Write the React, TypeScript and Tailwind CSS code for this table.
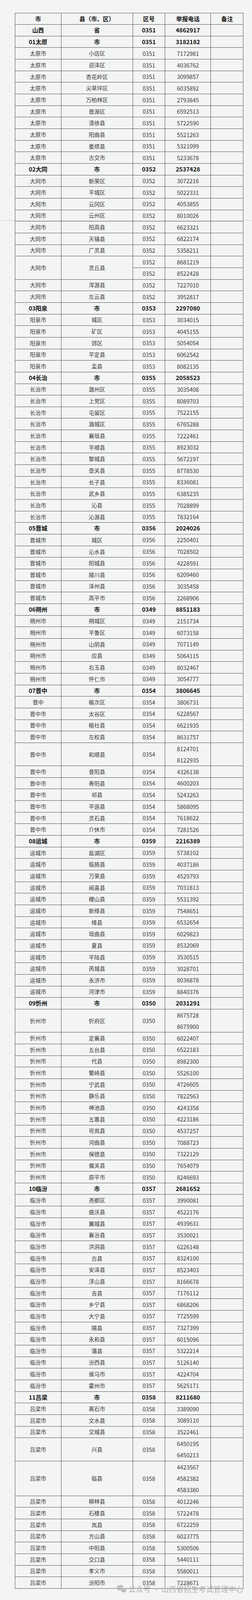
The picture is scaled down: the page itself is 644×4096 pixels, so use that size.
import React from 'react';

type Item = [string, string, string?];
type City = { head: string; code: string; phone: string; name: string; items: Item[] };

const CITIES: City[] = [
  { head: '01太原', code: '0351', phone: '3182182', name: '太原市', items: [
    ['小店区', '7172981'], ['迎泽区', '4036762'], ['杏花岭区', '3099857'], ['尖草坪区', '6035892'], ['万柏林区', '2793845'],
    ['晋源区', '6592513'], ['清徐县', '5722590'], ['阳曲县', '5521263'], ['娄烦县', '5321099'], ['古交市', '5233678'],
  ] },
  { head: '02大同', code: '0352', phone: '2537428', name: '大同市', items: [
    ['新荣区', '3072216'], ['平城区', '5022331'], ['云冈区', '4053855'], ['云州区', '8010026'], ['阳高县', '6623321'],
    ['天镇县', '6822174'], ['广灵县', '5358211'], ['灵丘县', '8681219|8522428'], ['浑源县', '7227010'], ['左云县', '3952817'],
  ] },
  { head: '03阳泉', code: '0353', phone: '2297080', name: '阳泉市', items: [
    ['城区', '3034015'], ['矿区', '4045155'], ['郊区', '5054054'], ['平定县', '6062542'], ['盂县', '8082135'],
  ] },
  { head: '04长治', code: '0355', phone: '2058523', name: '长治市', items: [
    ['潞州区', '3035408'], ['上党区', '8089703'], ['屯留区', '7522155'], ['潞城区', '6765288'], ['襄垣县', '7222461'],
    ['平顺县', '8923032'], ['黎城县', '5672197'], ['壶关县', '8778530'], ['长子县', '8336081'], ['武乡县', '6385235'],
    ['沁县', '7028899'], ['沁源县', '7832164'],
  ] },
  { head: '05晋城', code: '0356', phone: '2024026', name: '晋城市', items: [
    ['城区', '2250401'], ['沁水县', '7028502'], ['阳城县', '4228591'], ['陵川县', '6209460'], ['泽州县', '3035458'], ['高平市', '2268906'],
  ] },
  { head: '06朔州', code: '0349', phone: '8851183', name: '朔州市', items: [
    ['朔城区', '2151734'], ['平鲁区', '6073158'], ['山阴县', '7071149'], ['应县', '5064115'], ['右玉县', '8032467'], ['怀仁市', '3054777'],
  ] },
  { head: '07晋中', code: '0354', phone: '3806645', name: '晋中市', items: [
    ['榆次区', '3806731', '晋中'], ['太谷区', '6228567'], ['榆社县', '6621935'], ['左权县', '8631757'], ['和顺县', '8124701/8122935'],
    ['昔阳县', '4326138'], ['寿阳县', '4600203'], ['祁县', '5243263'], ['平遥县', '5868095'], ['灵石县', '7618622'], ['介休市', '7281526'],
  ] },
  { head: '08运城', code: '0359', phone: '2216389', name: '运城市', items: [
    ['盐湖区', '5738102'], ['临猗县', '4037186'], ['万荣县', '4529793'], ['闻喜县', '7031813'], ['稷山县', '5531392'],
    ['新绛县', '7548651'], ['绛县', '6532654'], ['垣曲县', '6029823'], ['夏县', '8532069'], ['平陆县', '3530515'],
    ['芮城县', '3028701'], ['永济市', '8036878'], ['河津市', '8840376'],
  ] },
  { head: '09忻州', code: '0350', phone: '2031291', name: '忻州市', items: [
    ['忻府区', '8675728/8675900'], ['定襄县', '6022407'], ['五台县', '6522183'], ['代县', '8982300'], ['繁峙县', '5526100'],
    ['宁武县', '4726605'], ['静乐县', '7822563'], ['神池县', '4243358'], ['五寨县', '4223186'], ['岢岚县', '4537257'],
    ['河曲县', '7088723'], ['保德县', '7322129'], ['偏关县', '7654079'], ['原平市', '8246693'],
  ] },
  { head: '10临汾', code: '0357', phone: '2681652', name: '临汾市', items: [
    ['尧都区', '3990081'], ['曲沃县', '4522176'], ['翼城县', '4939631'], ['襄汾县', '3530021'], ['洪洞县', '6226148'],
    ['古县', '8324100'], ['安泽县', '8523403'], ['浮山县', '8166678'], ['吉县', '7176112'], ['乡宁县', '6868206'],
    ['大宁县', '7725599'], ['隰县', '7327399'], ['永和县', '6015096'], ['蒲县', '5322214'], ['汾西县', '5126140'],
    ['侯马市', '4224704'], ['霍州市', '5625171'],
  ] },
  { head: '11吕梁', code: '0358', phone: '8211680', name: '吕梁市', items: [
    ['离石市', '3389090'], ['文水县', '3089110'], ['交城县', '3522461'], ['兴县', '6450195/6450213'],
    ['临县', '4423567/4582382/4583380'], ['柳林县', '4012246'], ['石楼县', '5722478'], ['岚县', '6722259'],
    ['方山县', '6023775'], ['中阳县', '5300506'], ['交口县', '5440111'], ['孝义市', '5580011'], ['汾阳市', '7228671'],
  ] },
];

const ROW_H: Record<number, string> = {
  1: 'h-[29.67px]',
  2: 'h-[59.34px]',
  3: 'h-[89px]',
};

const cell = 'border border-[#505050] p-0 text-center align-middle';
const num = 'text-[14.5px]';

function BoldRow({ a, b, c, d }: { a: string; b: string; c: string; d: string }) {
  return (
    <tr className={`${ROW_H[1]} font-bold text-[#151515] text-[15px]`}>
      <td className={cell}>{a}</td>
      <td className={cell}>{b}</td>
      <td className={cell}>{c}</td>
      <td className={`${cell} border-l-[#222]`}>{d}</td>
      <td className={cell}></td>
    </tr>
  );
}

function ItemRows({ city, code, item }: { city: string; code: string; item: Item }) {
  const [county, phone, override] = item;
  const name = override ?? city;

  // 灵丘县: two area-code / phone lines with their own borders
  if (phone.includes('|')) {
    const [p1, p2] = phone.split('|');
    return (
      <>
        <tr className={`${ROW_H[1]} text-[#383838] text-[14px]`}>
          <td rowSpan={2} className={cell}>{name}</td>
          <td rowSpan={2} className={cell}>{county}</td>
          <td className={`${cell} ${num}`}>{code}</td>
          <td className={`${cell} ${num} border-l-[#222]`}>{p1}</td>
          <td className={cell}></td>
        </tr>
        <tr className={`${ROW_H[1]} text-[#383838] text-[14px]`}>
          <td className={`${cell} ${num}`}>{code}</td>
          <td className={`${cell} ${num} border-l-[#222]`}>{p2}</td>
          <td className={cell}></td>
        </tr>
      </>
    );
  }

  const phones = phone.split('/');
  return (
    <tr className={`${ROW_H[phones.length]} text-[#383838] text-[14px]`}>
      <td className={cell}>{name}</td>
      <td className={cell}>{county}</td>
      <td className={`${cell} ${num}`}>{code}</td>
      <td className={`${cell} ${num} border-l-[#222]`}>
        {phones.length > 1
          ? phones.map((p) => (
              <div key={p} className="leading-[29px]">{p}</div>
            ))
          : phone}
      </td>
      <td className={cell}></td>
    </tr>
  );
}

function WeChatIcon() {
  return (
    <svg width="26" height="21" viewBox="0 0 26 21" fill="#b4b4b4">
      <path d="M9.6 1C4.6 1 .8 4.2.8 8.1c0 2.2 1.2 4.1 3.1 5.4l-.8 2.5 2.9-1.5c1 .3 2.2.5 3.4.5h.6c-.2-.6-.3-1.2-.3-1.8 0-3.6 3.4-6.5 7.7-6.5h.5C17.3 3.4 13.8 1 9.6 1z" />
      <circle cx="6.6" cy="6.3" r="1.1" fill="#f3f4f4" />
      <circle cx="12.4" cy="6.3" r="1.1" fill="#f3f4f4" />
      <path d="M17.8 8.2c-3.9 0-7 2.6-7 5.8s3.1 5.8 7 5.8c.8 0 1.6-.1 2.4-.4l2.3 1.2-.6-2c1.7-1.1 2.9-2.8 2.9-4.6 0-3.2-3.1-5.8-7-5.8z" />
      <circle cx="15.5" cy="12.6" r="0.9" fill="#f3f4f4" />
      <circle cx="20.2" cy="12.6" r="0.9" fill="#f3f4f4" />
    </svg>
  );
}

export default function App() {
  return (
    <div className="relative min-h-[4096px] bg-[#f3f4f4] pl-[37.5px] pt-[32.5px] font-['Noto_Sans_CJK_SC','Noto_Sans',sans-serif]">
      {/* faint stitching line from the original screenshot */}
      <div className="absolute left-0 right-0 top-[564px] h-px bg-[#cfcfcf]" />

      <div className="relative w-[584px]">
        <table className="w-[584px] table-fixed border-collapse">
          <colgroup>
            <col className="w-[118.5px]" />
            <col className="w-[182.6px]" />
            <col className="w-[82.6px]" />
            <col className="w-[117px]" />
            <col className="w-[83.3px]" />
          </colgroup>
          <tbody>
            <tr className={`${ROW_H[1]} font-bold text-[#151515] text-[15px]`}>
              <td className={cell}>市</td>
              <td className={cell}>县（市、区）</td>
              <td className={cell}>区号</td>
              <td className={`${cell} border-l-[#222]`}>举报电话</td>
              <td className={cell}>备注</td>
            </tr>
            <BoldRow a="山西" b="省" c="0351" d="4862917" />
            {CITIES.map((c) => (
              <React.Fragment key={c.head}>
                <BoldRow a={c.head} b="市" c={c.code} d={c.phone} />
                {c.items.map((it) => (
                  <ItemRows key={it[0]} city={c.name} code={c.code} item={it} />
                ))}
              </React.Fragment>
            ))}
          </tbody>
        </table>

        {/* watermark */}
        <div className="absolute right-0 bottom-0 flex translate-y-1/2 items-center gap-[4px] text-[19px] leading-none text-[#ababab] opacity-90">
          <WeChatIcon />
          <span>公众号 · 山西省招生考试管理中心</span>
        </div>
      </div>
    </div>
  );
}
